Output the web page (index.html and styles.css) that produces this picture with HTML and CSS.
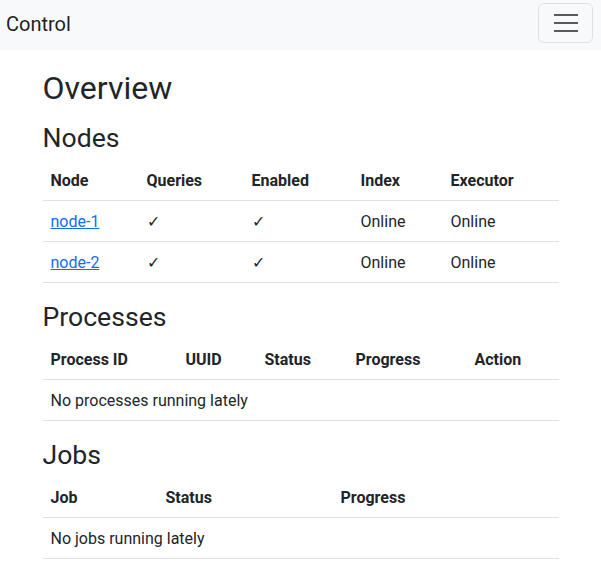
FILE: index.html
```html
<!DOCTYPE html>
<html lang="en">
<head>
<meta charset="utf-8">
<title>Control</title>
<link rel="stylesheet" href="styles.css">
</head>
<body>
<nav class="navbar">
  <a class="brand" href="#">Control</a>
  <button class="toggler" type="button" aria-label="Toggle navigation">
    <svg width="24" height="18" viewBox="0 0 24 18"><path d="M0 1h24M0 9h24M0 17h24" stroke="rgba(33,37,41,0.75)" stroke-width="2"/></svg>
  </button>
</nav>
<main class="container">
  <h1 class="title">Overview</h1>

  <h2 class="section">Nodes</h2>
  <table class="table">
    <thead>
      <tr><th class="n1">Node</th><th class="n2">Queries</th><th class="n3">Enabled</th><th class="n4">Index</th><th class="n5">Executor</th></tr>
    </thead>
    <tbody>
      <tr><td><a href="#">node-1</a></td><td>✓</td><td>✓</td><td>Online</td><td>Online</td></tr>
      <tr><td><a href="#">node-2</a></td><td>✓</td><td>✓</td><td>Online</td><td>Online</td></tr>
    </tbody>
  </table>

  <h2 class="section">Processes</h2>
  <table class="table">
    <thead>
      <tr><th class="p1">Process ID</th><th class="p2">UUID</th><th class="p3">Status</th><th class="p4">Progress</th><th class="p5">Action</th></tr>
    </thead>
    <tbody>
      <tr><td colspan="5">No processes running lately</td></tr>
    </tbody>
  </table>

  <h2 class="section">Jobs</h2>
  <table class="table">
    <thead>
      <tr><th class="j1">Job</th><th class="j2">Status</th><th class="j3">Progress</th></tr>
    </thead>
    <tbody>
      <tr><td colspan="3">No jobs running lately</td></tr>
    </tbody>
  </table>
</main>
</body>
</html>
```
FILE: styles.css
```css
* { box-sizing: border-box; }
body {
  margin: 0;
  font-family: Roboto, "Noto Sans", sans-serif;
  font-size: 16px;
  line-height: 1.5;
  color: #212529;
  background: #fff;
}
.navbar {
  height: 50px;
  background: #f8f9fa;
  display: flex;
  justify-content: space-between;
  align-items: flex-start;
  padding: 3px 8px 0 6px;
}
.brand {
  font-size: 20px;
  line-height: 42px;
  color: rgba(0,0,0,0.9);
  text-decoration: none;
}
.toggler {
  width: 55px;
  height: 40px;
  border: 1px solid rgba(0,0,0,0.1);
  border-radius: 6px;
  background: transparent;
  display: flex;
  align-items: center;
  justify-content: center;
  padding: 0;
}
.toggler svg { display: block; }
.container {
  width: 540px;
  margin: 0 auto;
  padding: 15px 12px 0;
}
.title {
  font-size: 32px;
  font-weight: 400;
  line-height: 37px;
  margin: 0 0 11px;
  padding-top: 5px;
}
.section {
  font-size: 26.6px;
  font-weight: 400;
  line-height: 32px;
  margin: 0 0 6px;
  padding-top: 4px;
}
.table {
  width: 100%;
  border-collapse: collapse;
  margin-bottom: 14px;
  table-layout: fixed;
}
.table th, .table td {
  text-align: left;
  padding: 9px 8px 7px;
  border-bottom: 1px solid #dee2e6;
  vertical-align: top;
}
.table th { font-weight: 700; }
.table a { color: #0d6efd; text-decoration: underline; }
.n1 { width: 96px; } .n2 { width: 105px; } .n3 { width: 109px; } .n4 { width: 90px; } .n5 { width: 116px; }
.p1 { width: 135px; } .p2 { width: 79px; } .p3 { width: 91px; } .p4 { width: 119px; } .p5 { width: 92px; }
.j1 { width: 115px; } .j2 { width: 175px; } .j3 { width: 226px; }
```
